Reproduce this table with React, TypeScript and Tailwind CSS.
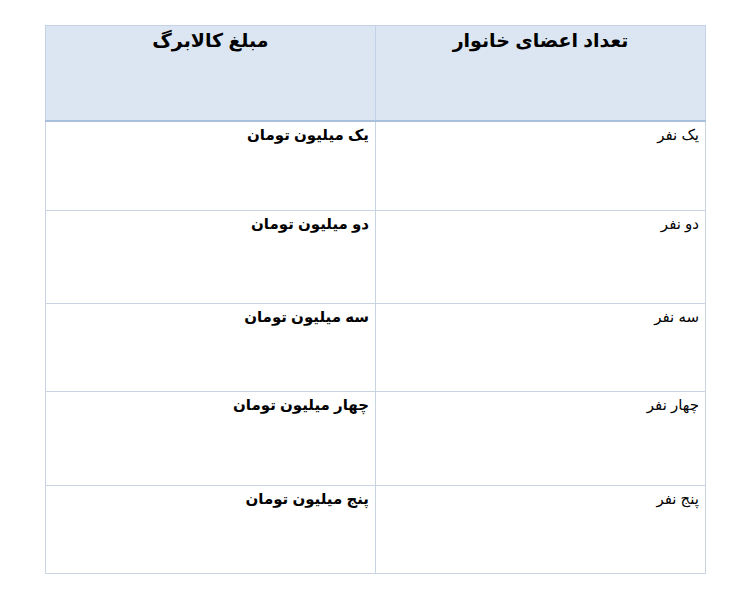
import React from "react";

type Row = {
    members: string;
    amount: string;
    height: string;
};

const rows: Row[] = [
    { members: "یک نفر", amount: "یک میلیون تومان", height: "h-[90px]" },
    { members: "دو نفر", amount: "دو میلیون تومان", height: "h-[93px]" },
    { members: "سه نفر", amount: "سه میلیون تومان", height: "h-[88px]" },
    { members: "چهار نفر", amount: "چهار میلیون تومان", height: "h-[94px]" },
    { members: "پنج نفر", amount: "پنج میلیون تومان", height: "h-[88px]" },
];

export default function App() {
    return (
        <div className="w-[743px] h-[603px] bg-white pt-[25px] pl-[45px] font-['Liberation_Sans','DejaVu_Sans',sans-serif] text-black">
            <table dir="rtl" className="w-[660px] border-collapse table-fixed">
                <thead>
                    <tr className="h-[95px] bg-[#dce6f2]">
                        <th className="w-[330px] border border-[#c3d2e4] border-b-2 border-b-[#a9c0dc] align-top pt-[2px] text-[19px] leading-[26px] font-bold text-center">
                            تعداد اعضای خانوار
                        </th>
                        <th className="w-[330px] border border-[#c3d2e4] border-b-2 border-b-[#a9c0dc] align-top pt-[2px] text-[19px] leading-[26px] font-bold text-center">
                            مبلغ کالابرگ
                        </th>
                    </tr>
                </thead>
                <tbody>
                    {rows.map((row) => (
                        <tr key={row.members} className={row.height}>
                            <td className="border border-[#c8d4e2] align-top pt-[2px] pr-[6px] text-[15px] leading-[22px] text-right">
                                {row.members}
                            </td>
                            <td className="border border-[#c8d4e2] align-top pt-[2px] pr-[6px] text-[15px] leading-[22px] font-bold text-right">
                                {row.amount}
                            </td>
                        </tr>
                    ))}
                </tbody>
            </table>
        </div>
    );
}
